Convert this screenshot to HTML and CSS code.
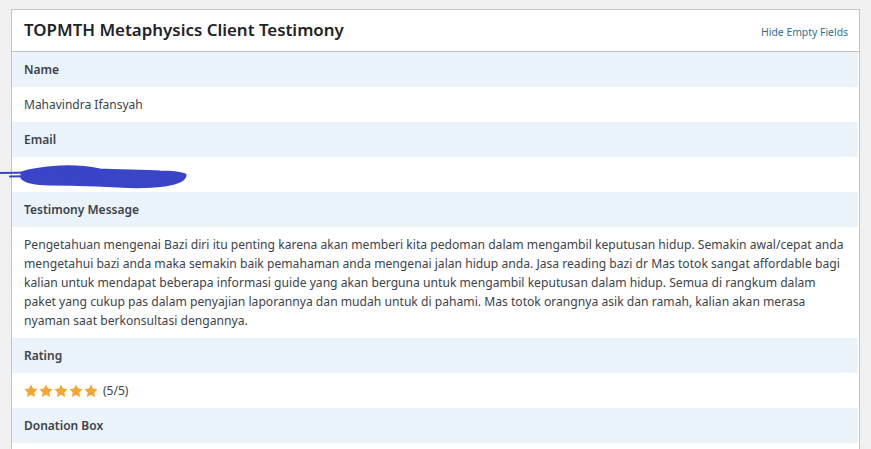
FILE: index.html
```html
<!DOCTYPE html>
<html lang="id">
<head>
<meta charset="utf-8">
<title>Entry</title>
<link rel="stylesheet" href="styles.css">
</head>
<body>
<div class="entry">
  <div class="entry-head">
    <h2 class="entry-title">TOPMTH Metaphysics Client Testimony</h2>
    <a class="toggle-empty" href="#">Hide Empty Fields</a>
  </div>
  <div class="field-label">Name</div>
  <div class="field-value">Mahavindra Ifansyah</div>
  <div class="field-label">Email</div>
  <div class="field-value email-value"></div>
  <div class="field-label">Testimony Message</div>
  <div class="field-value message">Pengetahuan mengenai Bazi diri itu penting karena akan memberi kita pedoman dalam mengambil keputusan hidup. Semakin awal/cepat anda<br>mengetahui bazi anda maka semakin baik pemahaman anda mengenai jalan hidup anda. Jasa reading bazi dr Mas totok sangat affordable bagi<br>kalian untuk mendapat beberapa informasi guide yang akan berguna untuk mengambil keputusan dalam hidup. Semua di rangkum dalam<br>paket yang cukup pas dalam penyajian laporannya dan mudah untuk di pahami. Mas totok orangnya asik dan ramah, kalian akan merasa<br>nyaman saat berkonsultasi dengannya.</div>
  <div class="field-label">Rating</div>
  <div class="field-value rating">
    <span class="stars">
      <svg class="star" viewBox="0 0 20 20"><path d="M10 .8l2.9 5.8 6.4.9-4.6 4.5 1.1 6.4L10 15.4l-5.8 3 1.1-6.4L.7 7.5l6.4-.9z"/></svg>
      <svg class="star" viewBox="0 0 20 20"><path d="M10 .8l2.9 5.8 6.4.9-4.6 4.5 1.1 6.4L10 15.4l-5.8 3 1.1-6.4L.7 7.5l6.4-.9z"/></svg>
      <svg class="star" viewBox="0 0 20 20"><path d="M10 .8l2.9 5.8 6.4.9-4.6 4.5 1.1 6.4L10 15.4l-5.8 3 1.1-6.4L.7 7.5l6.4-.9z"/></svg>
      <svg class="star" viewBox="0 0 20 20"><path d="M10 .8l2.9 5.8 6.4.9-4.6 4.5 1.1 6.4L10 15.4l-5.8 3 1.1-6.4L.7 7.5l6.4-.9z"/></svg>
      <svg class="star" viewBox="0 0 20 20"><path d="M10 .8l2.9 5.8 6.4.9-4.6 4.5 1.1 6.4L10 15.4l-5.8 3 1.1-6.4L.7 7.5l6.4-.9z"/></svg>
    </span>
    <span class="score">(5/5)</span>
  </div>
  <div class="field-label">Donation Box</div>
  <div class="field-value"></div>
</div>

<!-- marker stroke covering the email address -->
<svg class="redact" width="200" height="34" viewBox="0 0 200 34">
  <path class="redact-thin" d="M0 13 L32 12.5 M10 16.5 L40 16"/>
  <path class="redact-blob" d="M22 13 C30 10 45 8 60 7 C75 6 90 8 100 10 C120 11 140 11 160 12 C172 12 180 13 185 15 C185 20 178 23 165 25 C150 27 132 27 118 26 C95 25 70 24 50 24 C36 24 26 22 22 18 Z"/>
</svg>
</body>
</html>
```

FILE: styles.css
```css
html, body {
  margin: 0;
  padding: 0;
}

body {
  background: #f0f0f1;
  font-family: "Segoe UI", "Noto Sans", "Open Sans", sans-serif;
  font-size: 12px;
  color: #3c434a;
  position: relative;
  height: 449px;
  overflow: hidden;
}

.entry {
  margin: 9px 0 0 11px;
  width: 847px;
  background: #fff;
  border: 1px solid #c3c4c7;
}

.entry-head {
  display: flex;
  align-items: center;
  justify-content: space-between;
  height: 41px;
  padding: 0 11px 0 12px;
  border-bottom: 1px solid #c3c4c7;
}

.entry-title {
  margin: 0;
  font-size: 16.9px;
  font-weight: 600;
  color: #1d2327;
  line-height: 1;
}

.toggle-empty {
  font-size: 10.4px;
  color: #2c6f96;
  text-decoration: none;
  padding-top: 2px;
}

.field-label,
.field-value {
  padding: 8px 12px;
  line-height: 19px;
  min-height: 19px;
  margin-right: 1px;
}

.field-label {
  background: #eaf2fa;
  font-weight: 600;
  color: #3c434a;
}

.field-value {
  background: #fff;
}

.message {
  white-space: nowrap;
  font-size: 12.13px;
}

.rating {
  display: flex;
  align-items: center;
  gap: 5px;
}

.stars {
  display: flex;
  gap: 1px;
}

.star {
  width: 14px;
  height: 14px;
  fill: #f6a530;
}

.score {
  color: #3c434a;
}

.redact {
  position: absolute;
  left: 0;
  top: 160px;
}

.redact-thin {
  fill: none;
  stroke: #3a44c8;
  stroke-width: 2;
  stroke-linecap: round;
}

.redact-blob {
  fill: #3a44c8;
  stroke: #3a44c8;
  stroke-width: 3;
  stroke-linejoin: round;
}
```
